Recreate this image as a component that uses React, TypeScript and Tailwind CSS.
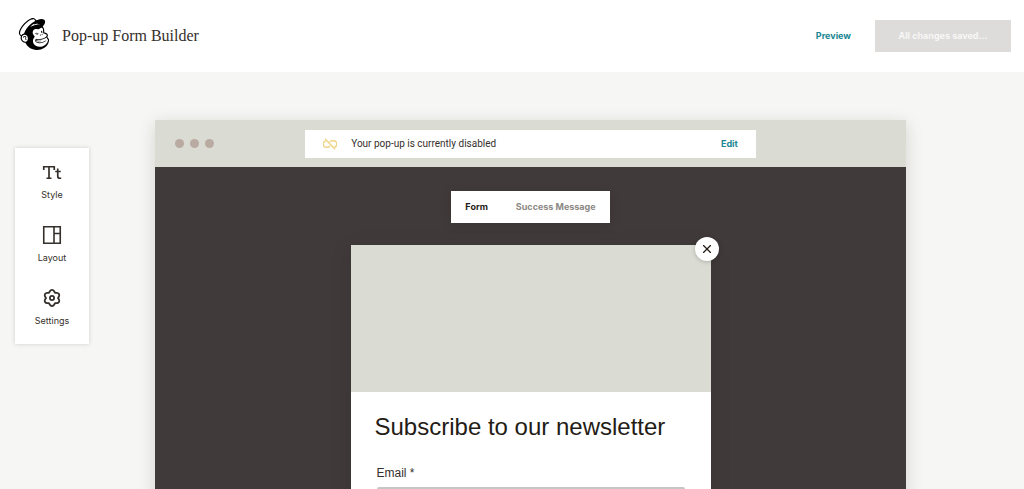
import { X } from "lucide-react";
import { SiMailchimp } from "react-icons/si";

function TypeIcon() {
  return (
    <svg width="20" height="20" viewBox="0 0 20 20" fill="none" stroke="currentColor" strokeWidth="1.7" aria-hidden="true">
      <path d="M1.75 8V4.75h10.5V8M7 4.75v11.5M4.5 16.25h5" />
      <path d="M15.75 6.5v7.75q0 2 2 2h1.5M13.25 9.5h5.5" />
    </svg>
  );
}

function LayoutIcon() {
  return (
    <svg width="20" height="20" viewBox="0 0 20 20" fill="none" stroke="currentColor" strokeWidth="1.6" aria-hidden="true">
      <path d="M1.75 1.75h16.5v16.5H1.75zM12 1.75v16.5M12 8.5h6.25" />
    </svg>
  );
}

function GearIcon() {
  return (
    <svg width="20" height="20" viewBox="0 0 20 20" fill="none" stroke="currentColor" strokeWidth="1.8" strokeLinejoin="round" aria-hidden="true">
      <path d="M7.9 3.2A2.4 2.4 0 0 1 12.1 3.2L13 4.8L14.84 4.78A2.4 2.4 0 0 1 16.94 8.42L16 10L16.94 11.58A2.4 2.4 0 0 1 14.84 15.22L13 15.2L12.1 16.8A2.4 2.4 0 0 1 7.9 16.8L7 15.2L5.16 15.22A2.4 2.4 0 0 1 3.06 11.58L4 10L3.06 8.42A2.4 2.4 0 0 1 5.16 4.78L7 4.8Z" />
      <circle cx="10" cy="10" r="2.1" />
    </svg>
  );
}

function BrokenLinkIcon() {
  return (
    <svg width="14" height="12" viewBox="0 0 14 12" fill="none" stroke="currentColor" strokeWidth="1.5" aria-hidden="true">
      <path d="M2 .8 12 11.2" />
      <path d="M2.8 2.9A3.2 3.2 0 0 0 4 9.2H4.6Q6 9.2 6.8 8" />
      <path d="M11.2 9.1A3.2 3.2 0 0 0 10 2.8H9.2Q7.6 2.8 6.8 4.2" />
    </svg>
  );
}

const tools = [
  { label: "Style", icon: <TypeIcon /> },
  { label: "Layout", icon: <LayoutIcon /> },
  { label: "Settings", icon: <GearIcon /> },
];

export default function App() {
  return (
    <div className="flex h-screen flex-col overflow-hidden bg-[#f6f6f4] font-['Inter',sans-serif] text-[#241c15]">
      <header className="flex h-[72px] shrink-0 items-center bg-white pr-[13px] pl-[18px]">
        <SiMailchimp size={32} className="mb-1 text-black" aria-hidden="true" />
        <h1 className="ml-3 font-['Liberation_Serif',serif] text-base text-[#35302b]">Pop-up Form Builder</h1>
        <a href="#preview" className="ml-auto text-[9px] font-bold text-[#1a8793]">Preview</a>
        <button type="button" disabled className="ml-6 h-8 w-[136px] bg-[#dddcdb] text-[9px] font-bold text-[#f7f7f6]">
          All changes saved...
        </button>
      </header>

      <div className="flex min-h-0 flex-1 items-start pr-[118px] pl-[15px]">
        <nav className="mt-[76px] flex w-[74px] shrink-0 flex-col gap-[26px] bg-white pt-3.5 pb-[19px] shadow-[0_0_4px_rgba(36,28,21,0.18)]">
          {tools.map((tool) => (
            <button key={tool.label} type="button" className="flex flex-col items-center gap-2 text-[9px] leading-[9px] text-[#35302b]">
              {tool.icon}
              {tool.label}
            </button>
          ))}
        </nav>

        <main className="mt-12 ml-[66px] flex-1 bg-[#403b3a] shadow-[0_4px_16px_rgba(36,28,21,0.16)]">
          <div className="grid h-[47px] grid-cols-[1fr_3fr_1fr] items-center bg-[#dadbd2]">
            <div className="flex gap-1.5 pl-5">
              <span className="size-[9px] rounded-full bg-[#b9aaa2]" />
              <span className="size-[9px] rounded-full bg-[#b9aaa2]" />
              <span className="size-[9px] rounded-full bg-[#b9aaa2]" />
            </div>
            <div className="flex h-7 items-center bg-white px-[18px]">
              <span className="text-[#efd587]"><BrokenLinkIcon /></span>
              <p className="ml-3.5 font-['Roboto',sans-serif] text-[10px] text-[#35302b]">Your pop-up is currently disabled</p>
              <a href="#edit" className="ml-auto text-[9px] font-bold text-[#1a8793]">Edit</a>
            </div>
          </div>

          <div className="flex flex-col items-center pt-6">
            <div role="tablist" className="flex h-8 items-center gap-7 bg-white px-3.5 text-[9px] font-bold shadow-[0_2px_12px_rgba(0,0,0,0.12)]">
              <button type="button" role="tab" aria-selected="true">Form</button>
              <button type="button" role="tab" aria-selected="false" className="text-[#8c8985]">Success Message</button>
            </div>

            <section className="relative mt-[22px] w-[360px] bg-white font-['Liberation_Sans',sans-serif] shadow-[0_4px_20px_rgba(0,0,0,0.12)]">
              <button type="button" aria-label="Close" className="absolute -top-2 -right-2 flex size-6 items-center justify-center rounded-full bg-white shadow-[0_1px_4px_rgba(0,0,0,0.2)]">
                <X size={14} strokeWidth={2} aria-hidden="true" />
              </button>
              <div className="h-[147px] bg-[#dadbd2]" />
              <form className="px-6 pt-5 pb-10">
                <h2 className="text-2xl leading-[30px]">Subscribe to our newsletter</h2>
                <div className="mt-6 px-0.5">
                  <label htmlFor="email" className="block text-xs leading-[14px] text-[#35302b]">Email *</label>
                  <input id="email" type="email" className="mt-[7px] block h-9 w-full rounded-xs border-2 border-[#c6c6c6] px-2 text-sm" />
                </div>
              </form>
            </section>
          </div>
        </main>
      </div>
    </div>
  );
}
